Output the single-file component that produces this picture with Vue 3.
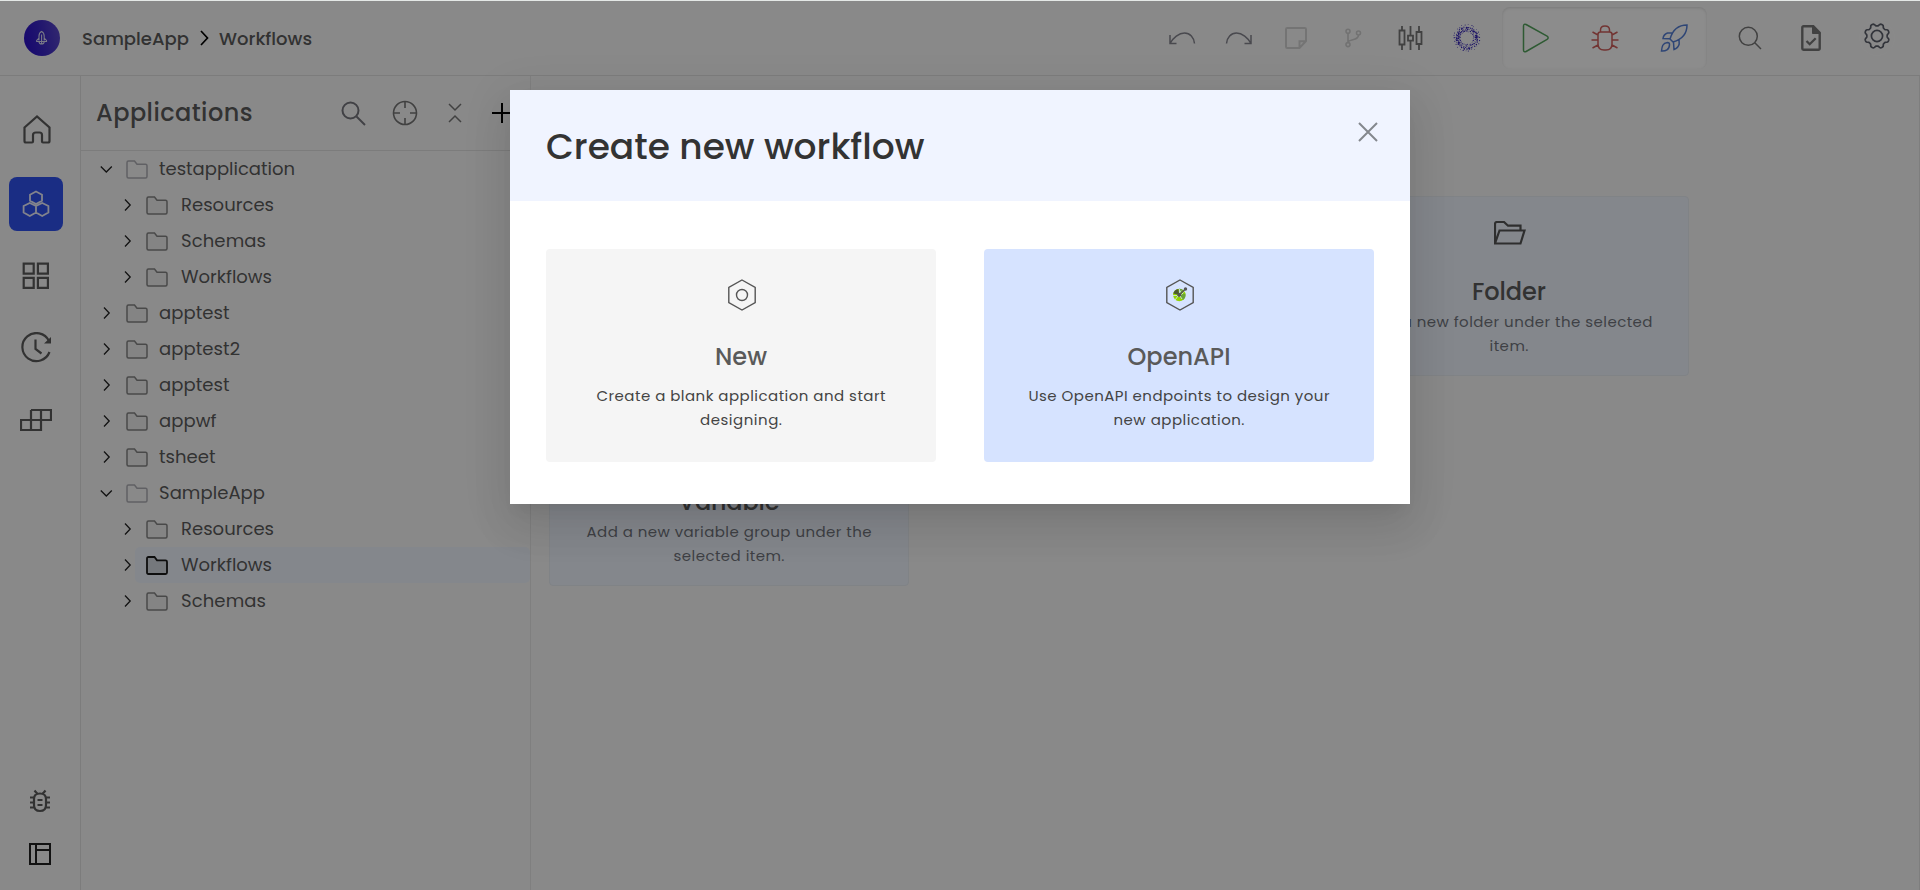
<script setup>
// Spreads a label's letters so that it takes a fixed width in any face.
const vFit = {
  mounted(el, { value }) {
    const range = document.createRange()
    range.selectNodeContents(el)
    const natural = range.getBoundingClientRect().width
    const gap = (value - natural) / (el.textContent.length - 1)
    el.style.letterSpacing = gap + 'px'
    el.style.marginRight = -gap + 'px'
  },
}

const tree = [
  { name: 'testapplication', w: 136, open: true },
  { name: 'Resources', w: 93, child: true },
  { name: 'Schemas', w: 85, child: true },
  { name: 'Workflows', w: 91, child: true },
  { name: 'apptest', w: 70.500 },
  { name: 'apptest2', w: 81 },
  { name: 'apptest', w: 70.500 },
  { name: 'appwf', w: 57.500 },
  { name: 'tsheet', w: 56.500 },
  { name: 'SampleApp', w: 106, open: true },
  { name: 'Resources', w: 93, child: true },
  { name: 'Workflows', w: 91, child: true, selected: true },
  { name: 'Schemas', w: 85, child: true },
]

const dots = Array.from({ length: 130 }, (_, i) => {
  const rnd = (k) => { const v = Math.sin(i * 12.9898 + k * 78.233) * 43758.5453; return v - Math.floor(v) }
  const a = (i / 130 + rnd(1) * 0.02) * Math.PI * 2
  const r = [6.8, 10.9, 8.6, 13, 9.8][i % 5] + rnd(2) * 1.2 - 0.6
  const mid = 1 - Math.abs(r - 9.6) / 5
  return { x: 14 + r * Math.cos(a), y: 14 + r * Math.sin(a), r: 0.4 + mid * 0.7 * rnd(3) }
})

const gear = (() => {
  let d = ''
  for (let i = 0; i <= 144; i++) {
    const a = (i / 144) * Math.PI * 2
    const s = Math.cos(8 * a + Math.PI)
    const r = 11.3 + 1.2 * Math.tanh(1.8 * s)
    d += (i ? 'L' : 'M') + (14 + r * Math.sin(a)).toFixed(2) + ' ' + (14 - r * Math.cos(a)).toFixed(2)
  }
  return d + 'Z'
})()
</script>

<template>
  <div class="app">
    <header class="top">
      <svg class="logo" width="36" height="36" viewBox="0 0 36 36">
        <defs><linearGradient id="lg" x1="0" x2="1" y1=".6" y2=".4"><stop offset="0" stop-color="#2c10c8" /><stop offset=".5" stop-color="#3c28c8" /><stop offset="1" stop-color="#5a48cc" /></linearGradient></defs>
        <circle cx="18" cy="18" r="18" fill="url(#lg)" />
        <g fill="none" stroke="#dcdcf4" stroke-width="1.1">
          <path d="M15 20.500v-4.500c0-2 1.400-4 2.600-4.600 1.200.6 2.600 2.600 2.600 4.600v4.500M15 18l-2.300 2.500v1h9.800v-1L20.200 18M15 21.500c0 3.400 5.200 3.400 5.200 0M17.600 14.500v9" />
        </g>
      </svg>
      <nav class="crumbs">
        <span v-fit="107">SampleApp</span>
        <svg width="9" height="16" viewBox="0 0 9 16"><path d="M1 1l6.500 7L1 15" fill="none" stroke="#000" stroke-width="1.700" /></svg>
        <span v-fit="93">Workflows</span>
      </nav>
      <div class="tools">
        <svg class="undo" width="28" height="16" viewBox="0 0 28 16"><path d="M2 5v8.500h6.500M2 13.500C5 8 11 3 16.500 3c5.500 0 9.500 4.500 10 10.500" /></svg>
        <svg class="redo" width="28" height="16" viewBox="0 0 28 16"><path d="M26 5v8.500h-6.500M26 13.500C23 8 17 3 11.500 3 6 3 2 7.500 1.500 13.500" /></svg>
        <svg class="note" width="22" height="22" viewBox="0 0 22 22"><path d="M1 2.200Q1 1 2.200 1h17.600Q21 1 21 2.200V14l-6.500 7H2.200Q1 21 1 19.800ZM14.500 21v-6.800H21" /></svg>
        <svg class="branch" width="17" height="20" viewBox="0 0 17 20"><circle cx="3" cy="3.200" r="2" /><circle cx="3" cy="16.600" r="2" /><circle cx="13.500" cy="5" r="2" /><path d="M3 5.200v9.400M13.500 7c0 5-6 4-10.500 6.500" /></svg>
        <svg class="sliders" width="25" height="24" viewBox="0 0 25 24"><path d="M4 0v4m0 15v5M12.500 0v9.500m0 5.500v9M21 0v6m0 12v6M1.500 4.500h5v14h-5zM10 9.700h5v5h-5zM18.500 6h5v12h-5z" /></svg>
        <svg class="ring" width="28" height="28" viewBox="0 0 28 28"><circle v-for="(d, i) in dots" :key="i" :cx="d.x" :cy="d.y" :r="d.r" fill="#3322b8" /></svg>
      </div>
      <div class="run">
        <svg width="28" height="30" viewBox="0 0 28 30" stroke="#55a55e"><path d="M1.500 3c0-1.600 1.200-2.300 2.600-1.500l21 11.700c1.400.8 1.400 2.300 0 3.100l-21 12.200c-1.400.8-2.600.1-2.600-1.500z" /></svg>
        <svg width="28" height="26" viewBox="0 0 28 26" stroke="#cf5f5c"><path d="M7 9.500Q7 7 9.500 7h9Q21 7 21 9.500V19q0 6-6 6h-2q-6 0-6-6ZM9.500 7V5q0-4 4.500-4t4.500 4v2M7 10L1.500 7M7 15H.5M7 20l-5.500 3M21 10l5.500-3M21 15h6.500M21 20l5.500 3" /></svg>
        <svg width="28" height="28" viewBox="0 0 28 28" stroke="#557fd6"><path d="M27 1C17 1 12 8 10 15l3 3c7-2 14-7 14-17ZM12 9H7.500q-4 1.500-4.500 5.500l6.500.2M19 15.500l.2 4.500q-1 4-5.200 5.500l-.5-7.300M7.500 18.500c-5 .500-5.500 4-6 8.500 4 .2 8-1 8-6.500 0-1.200-1-2-2-2Z" /></svg>
      </div>
      <div class="right">
        <svg class="find" width="24" height="24" viewBox="0 0 24 24"><circle cx="10.300" cy="10.300" r="9" /><path d="M16.800 16.800L23 23" /></svg>
        <svg class="doc" width="20" height="26" viewBox="0 0 20 26"><path d="M2.500 1.300h9.800l6.400 6.400v15.800a1.200 1.200 0 0 1-1.200 1.200H2.500a1.200 1.200 0 0 1-1.200-1.200V2.500a1.200 1.200 0 0 1 1.200-1.200Z" fill="none" stroke-width="2.400" /><path d="M11.500 1v7.500H19z" fill="#777" /><path d="M5.500 16l3.200 3.200 6-6" fill="none" stroke-width="2.300" /></svg>
        <span class="gear"><svg width="28" height="28" viewBox="0 0 28 28"><path :d="gear" /><circle cx="14" cy="14" r="5.600" /></svg></span>
      </div>
    </header>

    <div class="main">
      <aside class="rail">
        <span class="item home"><svg width="28" height="29" viewBox="0 0 28 29"><path d="M1.500 12.500L14 1.500l12.500 11V26q0 1.500-1.500 1.500h-5q-1 0-1-1V20q0-2.500-2.500-2.500h-3.500Q10 17.500 10 20v6.500q0 1-1 1H3Q1.500 27.500 1.500 26Z" /></svg></span>
        <span class="item on"><svg width="28" height="28" viewBox="0 0 28 28"><path d="M14 1.500l6 3.200v6L14 14l-6-3.300v-6zM7.800 13l6.200 3v6.500L7.800 26l-6.200-3.500V16zM20.200 13l6.200 3v6.500L20.200 26 14 22.500V16z" /></svg></span>
        <span class="item"><svg width="28" height="28" viewBox="0 0 28 28"><path d="M1.700 1.700h10v10h-10zM15.900 1.700h10v10h-10zM1.700 15.900h10v10h-10zM15.900 15.900h10v10h-10z" /></svg></span>
        <span class="item"><svg width="32" height="32" viewBox="0 0 32 32"><path d="M29 9A14 14 0 1 0 29.500 20M15.500 7.500V17l6 4.500" /><path d="M31 5v6.500h-7z" fill="#5c5c5c" stroke="none" /></svg></span>
        <span class="item"><svg width="32" height="22" viewBox="0 0 32 22"><path d="M11 1h20v10H1v10h20V1M11 1v20" /></svg></span>
        <span class="item low"><svg width="22" height="24" viewBox="0 0 22 24"><path d="M5 10q0-5.500 6-5.500T17 10v6q0 6-6 6t-6-6ZM1 8.500h4M1 13.500h4M1 18.500h4M17 8.500h4M17 13.500h4M17 18.500h4M5.500 1.500L8.500 5M16.500 1.500L13.500 5M8.500 11h5M8.500 16h5" /></svg></span>
        <span class="item panel"><svg width="22" height="22" viewBox="0 0 22 22"><path d="M1 1h20v20H1zM7 1v20M7 7h14" /></svg></span>
      </aside>

      <section class="side">
        <div class="head">
          <h2><span v-fit="156.500">Applications</span></h2>
          <svg class="s1" width="25" height="25" viewBox="0 0 25 25"><circle cx="9.500" cy="9.500" r="8" /><path d="M15.500 15.500L24 24" /></svg>
          <svg class="s2" width="26" height="26" viewBox="0 0 26 26"><circle cx="13" cy="13" r="11.500" /><path d="M13 1.500V8M13 18v6.500M1.500 13H8M18 13h6.500" /></svg>
          <svg class="s3" width="14" height="20" viewBox="0 0 14 20"><path d="M1 1l6 6 6-6M1 19l6-6 6 6" /></svg>
          <svg class="s4" width="20" height="20" viewBox="0 0 20 20"><path d="M10 0v20M0 10h20" /></svg>
        </div>
        <ul>
          <li v-for="(n, i) in tree" :key="i" :class="{ child: n.child, open: n.open, selected: n.selected }">
            <svg class="chev" width="14" height="14" viewBox="0 0 14 14"><path :d="n.open ? 'M1.800 4.500L7.300 10l5.500-5.500' : 'M5 1.500L10.200 7 5 12.500'" /></svg>
            <span class="row">
              <svg class="fold" width="22" height="19" viewBox="0 0 22 19"><path d="M1 2.500Q1 1 2.500 1h6l2.500 3.300h8.500Q21 4.300 21 5.800V16.500q0 1.500-1.500 1.500h-17Q1 18 1 16.500Z" /></svg>
              <span v-fit="n.w" class="name">{{ n.name }}</span>
            </span>
          </li>
        </ul>
      </section>

      <section class="content">
        <article class="tile folder">
          <svg width="32" height="24" viewBox="0 0 32 24"><path d="M1 22.500V3q0-2 2-2h7l4 3.700h12.500V9M1 22.500L5.500 9.500H30.500L26.500 22.500Z" /></svg>
          <h3><span v-fit="74">Folder</span></h3>
          <p><span v-fit="287">Add a new folder under the selected</span><br /><span v-fit="39">item.</span></p>
        </article>
        <article class="tile variable">
          <svg width="32" height="24" viewBox="0 0 32 24"><path d="M6 2Q1 12 6 22M26 2q5 10 0 20M11 7l10 10M21 7L11 17" /></svg>
          <h3><span v-fit="101">Variable</span></h3>
          <p><span v-fit="285">Add a new variable group under the</span><br /><span v-fit="111">selected item.</span></p>
        </article>
      </section>
    </div>

    <div class="overlay">
      <div class="modal">
        <div class="mhead">
          <h1><span v-fit="378.500">Create new workflow</span></h1>
          <svg width="20" height="20" viewBox="0 0 20 20"><path d="M1 1l18 18M19 1L1 19" /></svg>
        </div>
        <div class="mbody">
          <button class="card">
            <svg width="30" height="32" viewBox="0 0 30 32"><path d="M15 1l13.200 7.300v15.200L15 31 1.800 23.500V8.300z" /><circle cx="15" cy="16" r="5.500" /></svg>
            <h3><span v-fit="52">New</span></h3>
            <p><span v-fit="289">Create a blank application and start</span><br /><span v-fit="82">designing.</span></p>
          </button>
          <button class="card blue">
            <svg width="30" height="32" viewBox="0 0 30 32">
              <path d="M15 1l13.200 7.300v15.200L15 31 1.800 23.500V8.300z" />
              <g stroke="none"><circle cx="14.300" cy="16" r="6.200" fill="#93d500" /><path d="M14.300 16L8.300 14.500A6.200 6.200 0 0 1 13.300 9.900Z" fill="#4d5a31" /><path d="M14.300 16V9.800A6.200 6.200 0 0 1 18 11ZM14.300 16l6-1.500A6.200 6.200 0 0 1 18 21Z" fill="#6ba43a" /><circle cx="14.300" cy="16" r="1.900" fill="#555" /><circle cx="20.500" cy="10" r="1.700" fill="#555" /></g>
              <path d="M14.300 16l6-6" /><path d="M8 16.500h4M10 21l3-4M14.500 10v3.500M17 20l-2-3M16 11.500l-1.500 2.500M18.500 13.500L16.500 15.500" stroke="#d6e3ff" stroke-width=".8" />
            </svg>
            <h3><span v-fit="103">OpenAPI</span></h3>
            <p><span v-fit="301">Use OpenAPI endpoints to design your</span><br /><span v-fit="131">new application.</span></p>
          </button>
        </div>
      </div>
    </div>
  </div>
</template>

<style>
body { margin: 0; overflow: hidden; }
</style>

<style scoped>
* { box-sizing: border-box; }
.app { position: relative; width: 1920px; height: 890px; display: flex; flex-direction: column; background: #fafafa; border-top: 1px solid #e4e8e6; font-family: Poppins, Inter, "Open Sans", sans-serif; font-feature-settings: "cv11"; color: #5c5c5c; }
svg { display: block; flex: none; fill: none; }
h1, h2, h3, p, ul { margin: 0; padding: 0; font-weight: 500; }
span { white-space: nowrap; }

.top { height: 75px; flex: none; display: flex; align-items: center; border-bottom: 1px solid #e2e2e2; padding-left: 24px; }
.crumbs { display: flex; align-items: center; gap: 10.500px; margin-left: 22px; width: 241px; font-size: 18px; font-weight: 500; }
.tools { display: flex; align-items: center; margin-left: 845px; stroke: #85858f; stroke-width: 1.500; }
.redo { margin-left: 29px; }
.note { margin-left: 32px; stroke: #d4d4d4; stroke-width: 2; }
.branch { margin-left: 38px; stroke: #d0d0d0; stroke-width: 1.600; }
.sliders { margin-left: 36px; stroke: #777; stroke-width: 1.800; }
.ring { margin-left: 30px; stroke: none; }
.run { display: flex; align-items: center; gap: 41px; width: 205px; height: 62px; margin-left: 21px; padding-left: 20px; border-radius: 8px; background: #fff; box-shadow: inset 0 1px 3px #ddd; stroke-width: 1.500; }
.right { display: flex; align-items: center; margin-left: 31px; }
.find { stroke: #777; stroke-width: 1.500; }
.doc { margin-left: 39px; stroke: #777; }
.gear { width: 36px; height: 36px; margin: 0 0 0 38px; padding: 3px 4px; border-radius: 50%; border: 1px solid #fff4; }
.gear svg { margin: -2px 0 0 -1px; stroke: #5b5f6b; stroke-width: 1.700; }

.main { flex: 1; display: flex; min-height: 0; }
.rail { width: 81px; flex: none; display: flex; flex-direction: column; align-items: flex-start; padding: 27px 0 25px 9px; border-right: 1px solid #e2e2e2; stroke: #5c5c5c; stroke-width: 2.200; }
.item { width: 54px; height: 54px; display: flex; align-items: center; justify-content: center; margin-bottom: 18px; }
.home { height: 52px; width: 55px; margin-bottom: 22px; }
.on { border-radius: 8px; background: #3152f0; stroke: #eef0ff; stroke-width: 1.800; }
.low { width: 22px; height: 24px; margin: auto 0 30px 20px; stroke: #5c5c5c; }
.panel { width: 22px; height: 22px; margin: 0 0 0 20px; stroke: #222; stroke-width: 2; }

.side { width: 450px; flex: none; border-right: 1px solid #e8e8e8; }
.head { height: 75px; display: flex; align-items: center; padding-left: 15px; border-bottom: 1px solid #e2e2e2; }
h2 { width: 245px; font-size: 24px; line-height: 36px; }
.s1 { stroke: #77777f; stroke-width: 2; }
.s2 { margin-left: 26px; stroke: #777; stroke-width: 1.600; }
.s3 { margin-left: 30px; stroke: #777; stroke-width: 1.500; }
.s4 { margin-left: 30px; stroke: #000; stroke-width: 2; }
ul { list-style: none; }
li { display: flex; align-items: center; height: 36px; padding-left: 18px; }
.child { padding-left: 39px; }
.chev { stroke: #222; stroke-width: 1.300; }
.row { flex: 1; height: 36px; display: flex; align-items: center; gap: 11px; padding-left: 13px; }
.child .row { margin-left: 1px; padding-left: 11px; gap: 13px; border-radius: 5px; }
.fold { stroke: #858585; stroke-width: 1.500; fill: #f1f1f1; }
.open .fold { stroke: #b0b0b6; fill: none; }
.selected .row { background: #f0f6ff; }
.selected .fold { stroke: #1a1a1a; stroke-width: 1.800; fill: #d6dae2; }
.name { font-size: 18px; line-height: 36px; font-weight: 400; }

.content { flex: 1; display: grid; grid-template-columns: repeat(3, 360px); grid-template-rows: repeat(2, 180px); gap: 30px; padding: 120px 0 0 18px; border-right: 1px solid #e6e6e6; }
.tile { display: flex; flex-direction: column; align-items: center; padding-top: 24px; border: 1px solid #e9eef4; border-radius: 4px; background: #f0f6ff; stroke: #555; stroke-width: 2.200; }
.tile svg { margin-left: 1px; }
.folder { grid-area: 1 / 3; }
.variable { grid-area: 2 / 1; }
h3 { font-size: 24px; line-height: 36px; }
.tile h3 { margin-top: 29px; }
p { font-size: 15px; line-height: 24px; font-weight: 400; text-align: center; }
.tile p { color: #74767e; }

.overlay { position: absolute; inset: 0; background: rgba(0, 0, 0, 0.45); display: flex; justify-content: center; align-items: flex-start; padding-top: 89px; }
.modal { width: 900px; height: 414px; background: #fff; box-shadow: 0 11px 15px -7px rgba(0, 0, 0, 0.06), 0 24px 38px 3px rgba(0, 0, 0, 0.07), 0 9px 46px 8px rgba(0, 0, 0, 0.06); }
.mhead { display: flex; justify-content: space-between; height: 111px; padding: 32px 32px 0 36px; background: #f0f4ff; }
.mhead svg { stroke: #84878d; stroke-width: 2; }
h1 { font-size: 36px; line-height: 50px; color: #333; }
.mbody { display: flex; gap: 48px; padding: 48px 36px; }
.card { display: flex; flex-direction: column; align-items: center; width: 390px; height: 213px; padding: 30px 0 0; border: 0; border-radius: 4px; background: #f5f5f5; font: inherit; font-feature-settings: inherit; stroke: #555; stroke-width: 1.400; color: #444; }
.card svg { margin-left: 1px; }
.blue { background: #d6e3ff; }
.card h3 { margin-top: 28px; color: #5a5a5a; }
.card p { margin-top: 9px; }
</style>
